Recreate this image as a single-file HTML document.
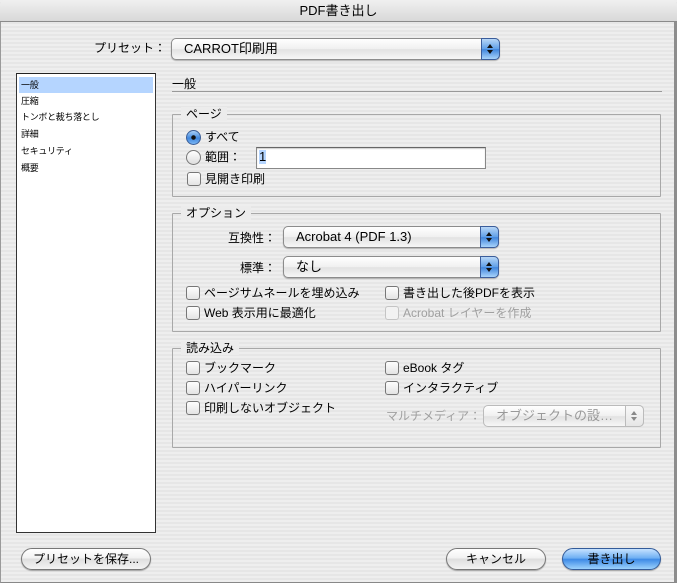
<!DOCTYPE html>
<html><head><meta charset="utf-8"><style>
*{margin:0;padding:0;box-sizing:border-box}
body{width:677px;height:583px;overflow:hidden;font-family:"Liberation Sans","Noto Sans CJK JP",sans-serif;font-size:12px;color:#000;
background:#ececec repeating-linear-gradient(#eeeeee 0,#eeeeee 2px,#e6e6e6 2px,#e6e6e6 4px);position:relative}
.a{position:absolute;white-space:nowrap;line-height:14px}
#tb{position:absolute;left:0;top:0;width:677px;height:22px;background:linear-gradient(#f0f0f0,#d8d8d8);border-bottom:1px solid #8a8a8a;text-align:center;line-height:22px;font-size:13px;border-radius:5px 5px 0 0}
#frame{position:absolute;left:0;top:22px;width:677px;height:561px;border-left:1px solid #9a9a9a;border-right:3px solid #8d8d8d;border-bottom:1px solid #888}
.pop{position:absolute;height:22px;border:1px solid #8c8c8c;border-radius:5px;background:linear-gradient(#fff,#f0f0f0 50%,#e2e2e2 52%,#f6f6f6);box-shadow:0 1px 1px rgba(0,0,0,.25);line-height:20px;padding-left:12px;font-size:13px}
.pop .ar{position:absolute;right:-1px;top:-1px;width:19px;height:22px;border-radius:0 5px 5px 0;background:linear-gradient(#b8d7f7,#5f9fe8 50%,#3f85dc 52%,#a8d3fb);border:1px solid #3b5d9b}
.pop .ar:before{content:"";position:absolute;left:5px;top:5px;border:3px solid transparent;border-bottom:4px solid #111;border-top:0}
.pop .ar:after{content:"";position:absolute;left:5px;top:11px;border:3px solid transparent;border-top:4px solid #111;border-bottom:0}
.pop.dis{color:#999;border-color:#bbb;box-shadow:none}
.pop.dis .ar{background:linear-gradient(#f8f8f8,#e6e6e6);border-color:#bbb}
.pop.dis .ar:before{border-bottom-color:#888}.pop.dis .ar:after{border-top-color:#888}
.grp{position:absolute;border:1px solid #a8a8a8;border-radius:1px}
.lg{position:absolute;background:#ececec;padding:0 5px;line-height:14px}
.cb{position:absolute;width:14px;height:14px;border:1px solid #777;border-radius:3px;background:linear-gradient(#fdfdfd,#e4e4e4)}
.cb.d{border-color:#c4c4c4;background:#f2f2f2}
.rb{position:absolute;width:15px;height:15px;border:1px solid #777;border-radius:50%;background:linear-gradient(#fff,#ddd)}
.rb.on{background:radial-gradient(circle,#111 0 2px,transparent 2.5px),linear-gradient(#a8d0f8,#3f86dd 55%,#79b5f4);border-color:#3a5d96}
.btn{position:absolute;height:22px;border:1px solid #777;border-radius:11px;background:linear-gradient(#fff,#f2f2f2 45%,#dedede 50%,#f4f4f4);text-align:center;line-height:20px;font-size:12px;box-shadow:0 1px 1px rgba(0,0,0,.3)}
.btn.def{background:linear-gradient(#c6e2ff,#6fb0f3 45%,#3e8ae6 52%,#9cd2fd);border-color:#335b99}
.li{position:absolute;left:21px;font-size:9px;line-height:12px;letter-spacing:-0.3px}
</style></head><body>
<div id="tb">PDF書き出し</div>
<div id="frame"></div>

<div class="a" style="left:94px;top:41px;font-size:12px">プリセット：</div>
<div class="pop" style="left:171px;top:38px;width:329px">CARROT印刷用<div class="ar"></div></div>

<div style="position:absolute;left:16px;top:73px;width:140px;height:460px;background:#fff;border:1px solid #333;border-top-color:#222"></div>
<div style="position:absolute;left:19px;top:77px;width:134px;height:16px;background:#b5d5ff"></div>
<div class="li" style="top:79px">一般</div>
<div class="li" style="top:95px">圧縮</div>
<div class="li" style="top:111px">トンボと裁ち落とし</div>
<div class="li" style="top:128px">詳細</div>
<div class="li" style="top:145px">セキュリティ</div>
<div class="li" style="top:162px">概要</div>

<div class="a" style="left:172px;top:77px">一般</div>
<div style="position:absolute;left:172px;top:91px;width:490px;height:1px;background:#999"></div>

<div class="grp" style="left:172px;top:114px;width:489px;height:83px"></div>
<div class="lg" style="left:181px;top:107px">ページ</div>
<div class="rb on" style="left:186px;top:130px"></div><div class="a" style="left:205px;top:130px">すべて</div>
<div class="rb" style="left:186px;top:150px"></div><div class="a" style="left:205px;top:150px">範囲：</div>
<div style="position:absolute;left:256px;top:147px;width:230px;height:22px;background:#fff;border:1px solid #888;border-top-color:#666;box-shadow:inset 0 1px 1px #ccc"></div>
<div class="a" style="left:259px;top:150px;background:#b5d5ff;font-size:13px">1</div>
<div class="cb" style="left:187px;top:172px"></div><div class="a" style="left:205px;top:172px">見開き印刷</div>

<div class="grp" style="left:172px;top:213px;width:489px;height:119px"></div>
<div class="lg" style="left:181px;top:206px">オプション</div>
<div class="a" style="left:228px;top:231px">互換性：</div>
<div class="pop" style="left:283px;top:226px;width:216px">Acrobat 4 (PDF 1.3)<div class="ar"></div></div>
<div class="a" style="left:240px;top:261px">標準：</div>
<div class="pop" style="left:283px;top:256px;width:216px">なし<div class="ar"></div></div>
<div class="cb" style="left:186px;top:286px"></div><div class="a" style="left:204px;top:286px">ページサムネールを埋め込み</div>
<div class="cb" style="left:186px;top:306px"></div><div class="a" style="left:204px;top:306px">Web 表示用に最適化</div>
<div class="cb" style="left:385px;top:286px"></div><div class="a" style="left:403px;top:286px">書き出した後PDFを表示</div>
<div class="cb d" style="left:385px;top:306px"></div><div class="a" style="left:403px;top:306px;color:#a0a0a0">Acrobat レイヤーを作成</div>

<div class="grp" style="left:172px;top:348px;width:489px;height:100px"></div>
<div class="lg" style="left:181px;top:341px">読み込み</div>
<div class="cb" style="left:186px;top:361px"></div><div class="a" style="left:204px;top:361px">ブックマーク</div>
<div class="cb" style="left:186px;top:381px"></div><div class="a" style="left:204px;top:381px">ハイパーリンク</div>
<div class="cb" style="left:186px;top:401px"></div><div class="a" style="left:204px;top:401px">印刷しないオブジェクト</div>
<div class="cb" style="left:385px;top:361px"></div><div class="a" style="left:403px;top:361px">eBook タグ</div>
<div class="cb" style="left:385px;top:381px"></div><div class="a" style="left:403px;top:381px">インタラクティブ</div>
<div class="a" style="left:386px;top:409px;color:#a0a0a0">マルチメディア：</div>
<div class="pop dis" style="left:483px;top:405px;width:161px">オブジェクトの設…<div class="ar"></div></div>

<div class="btn" style="left:21px;top:548px;width:130px">プリセットを保存...</div>
<div class="btn" style="left:446px;top:548px;width:100px">キャンセル</div>
<div class="btn def" style="left:562px;top:548px;width:99px">書き出し</div>
</body></html>
